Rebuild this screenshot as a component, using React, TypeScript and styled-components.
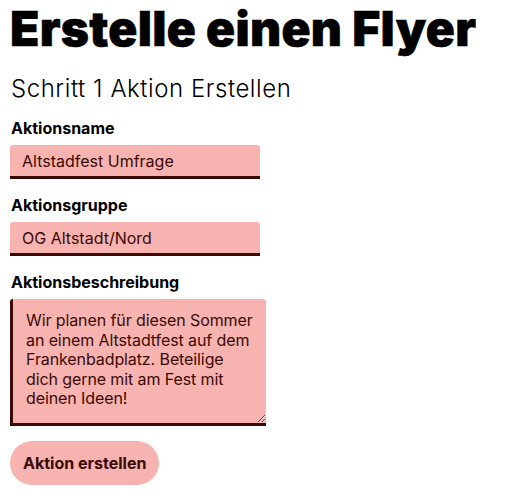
import { createGlobalStyle, styled } from 'styled-components';

// =============================================================================
// Constants
// =============================================================================

const COLOR_PINK = '#f7b3b0';
const COLOR_MAROON = '#3b0a06';
const FONT_BODY = "Inter, 'Noto Sans', sans-serif";

// =============================================================================
// Main Component
// =============================================================================

const App = () => (
  <>
    <GlobalStyle />
    <Page>
      <Title>Erstelle einen Flyer</Title>
      <Step>Schritt 1 Aktion Erstellen</Step>
      <Form onSubmit={(e) => e.preventDefault()}>
        <Field>
          <Label htmlFor="name">Aktionsname</Label>
          <TextInput id="name" defaultValue="Altstadfest Umfrage" />
        </Field>
        <Field>
          <Label htmlFor="group">Aktionsgruppe</Label>
          <TextInput id="group" defaultValue="OG Altstadt/Nord" />
        </Field>
        <Field>
          <Label htmlFor="desc">Aktionsbeschreibung</Label>
          <TextArea
            id="desc"
            defaultValue="Wir planen für diesen Sommer an einem Altstadtfest auf dem Frankenbadplatz. Beteilige dich gerne mit am Fest mit deinen Ideen!"
          />
        </Field>
        <Button type="submit">Aktion erstellen</Button>
      </Form>
    </Page>
  </>
);

export default App;

// =============================================================================
// Styled Components
// =============================================================================

const GlobalStyle = createGlobalStyle`
  body {
    margin: 0;
    background: #ffffff;
    font-family: ${FONT_BODY};
    color: #000000;
  }
`;

const Page = styled.main`
  padding: 0 10px;
`;

const Title = styled.h1`
  margin: 0;
  font-family: ${FONT_BODY};
  font-size: 48px;
  font-weight: 900;
  line-height: 58px;
  letter-spacing: 0.3px;
  -webkit-text-stroke: 0.6px #000;
`;

const Step = styled.h2`
  margin: 17px 0 0 1px;
  font-size: 24px;
  font-weight: 300;
  line-height: 28px;
  letter-spacing: 0.55px;
`;

const Form = styled.form`
  display: flex;
  flex-direction: column;
  align-items: flex-start;
  gap: 17px;
  margin-top: 16px;
`;

const Field = styled.div`
  display: flex;
  flex-direction: column;
  gap: 7px;
`;

const Label = styled.label`
  padding-left: 1px;
  font-size: 16px;
  font-weight: 700;
  line-height: 19px;
`;

const TextInput = styled.input`
  box-sizing: border-box;
  width: 250px;
  height: 34px;
  padding: 0 12px;
  border: none;
  border-bottom: 3px solid ${COLOR_MAROON};
  border-radius: 3px 3px 0 0;
  background: ${COLOR_PINK};
  color: ${COLOR_MAROON};
  font-family: ${FONT_BODY};
  font-size: 16px;
  outline: none;
`;

const TextArea = styled.textarea`
  box-sizing: border-box;
  width: 256px;
  height: 127px;
  padding: 12px 8px 12px 13px;
  border: none;
  border-left: 3px solid ${COLOR_MAROON};
  border-bottom: 3px solid ${COLOR_MAROON};
  border-radius: 3px 3px 0 0;
  background: ${COLOR_PINK};
  color: ${COLOR_MAROON};
  font-family: ${FONT_BODY};
  font-size: 16px;
  line-height: 19.5px;
  letter-spacing: -0.1px;
  outline: none;
`;

const Button = styled.button`
  margin-top: -2px;
  height: 44px;
  padding: 0 13px;
  border: none;
  border-radius: 22px;
  background: ${COLOR_PINK};
  color: ${COLOR_MAROON};
  font-family: ${FONT_BODY};
  font-size: 16px;
  font-weight: 700;
  cursor: pointer;
`;
